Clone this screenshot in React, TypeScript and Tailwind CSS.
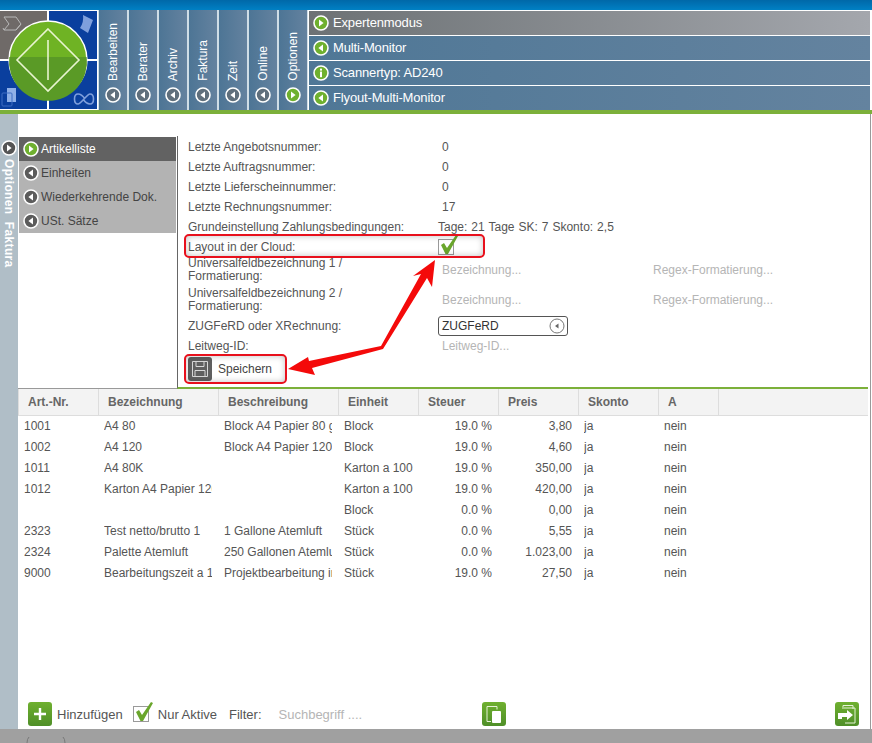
import React from "react";

const tabs = ["Bearbeiten", "Berater", "Archiv", "Faktura", "Zeit", "Online", "Optionen"];

const menu = ["Artikelliste", "Einheiten", "Wiederkehrende Dok.", "USt. Sätze"];

const fields = [
  { label: "Letzte Angebotsnummer:", value: "0" },
  { label: "Letzte Auftragsnummer:", value: "0" },
  { label: "Letzte Lieferscheinnummer:", value: "0" },
  { label: "Letzte Rechnungsnummer:", value: "17" },
];

const columns = [
  { title: "Art.-Nr.", width: "w-[80px]", align: "text-left pr-[6px]" },
  { title: "Bezeichnung", width: "w-[120px]", align: "text-left pr-[6px]" },
  { title: "Beschreibung", width: "w-[120px]", align: "text-left pr-[6px]" },
  { title: "Einheit", width: "w-[80px]", align: "text-left pr-[5px]" },
  { title: "Steuer", width: "w-[80px]", align: "text-right pr-[6px]" },
  { title: "Preis", width: "w-[80px]", align: "text-right pr-[6px]" },
  { title: "Skonto", width: "w-[80px]", align: "text-left pr-[6px]" },
  { title: "A", width: "w-[60px]", align: "text-left pr-[6px]" },
];

const rows = [
  ["1001", "A4 80", "Block A4 Papier 80 g", "Block", "19.0 %", "3,80", "ja", "nein"],
  ["1002", "A4 120", "Block A4 Papier 120 g", "Block", "19.0 %", "4,60", "ja", "nein"],
  ["1011", "A4 80K", "", "Karton a 100", "19.0 %", "350,00", "ja", "nein"],
  ["1012", "Karton A4 Papier 120", "", "Karton a 100", "19.0 %", "420,00", "ja", "nein"],
  ["", "", "", "Block", "0.0 %", "0,00", "ja", "nein"],
  ["2323", "Test netto/brutto 1", "1 Gallone Atemluft", "Stück", "0.0 %", "5,55", "ja", "nein"],
  ["2324", "Palette Atemluft", "250 Gallonen Atemluft", "Stück", "0.0 %", "1.023,00", "ja", "nein"],
  ["9000", "Bearbeitungszeit a 15", "Projektbearbeitung in", "Stück", "19.0 %", "27,50", "ja", "nein"],
];

function RoundIcon({ color, glyph = "left", size = 16 }: { color: string; glyph?: "left" | "right" | "info"; size?: number }) {
  return (
    <svg width={size} height={size} viewBox="0 0 16 16" className="shrink-0">
      <circle cx="8" cy="8" r="7" fill={color} stroke="#fff" strokeWidth="1.6" />
      {glyph === "left" && <path d="M10 4.600v6.800L5.400 8z" fill="#fff" />}
      {glyph === "right" && <path d="M6 4.600v6.800L10.600 8z" fill="#fff" />}
      {glyph === "info" && (
        <>
          <rect x="7" y="3.600" width="2" height="2" fill="#fff" />
          <rect x="7" y="6.600" width="2" height="5.600" fill="#fff" />
        </>
      )}
    </svg>
  );
}

function Logo() {
  return (
    <svg width="98" height="100" viewBox="0 0 98 100" className="shrink-0">
      <rect x="0" y="1" width="47" height="48" fill="#6f6a68" />
      <rect x="49" y="1" width="48" height="48" fill="#0a3f9e" />
      <rect x="0" y="51" width="47" height="48" fill="#0a3f9e" />
      <rect x="49" y="51" width="48" height="48" fill="#0a3f9e" />
      <path d="M4 7h12l5 7-5 6H4l5-6zM4 20l-1-2M16 20l5-6" fill="none" stroke="#b9b9b9" strokeWidth="1" />
      <path d="M83 5l10 5-5 13-8-5q4-6 3-13z" fill="#7f9fdc" />
      <rect x="7" y="78" width="9" height="14" fill="#8fb0e8" />
      <rect x="2" y="83" width="10" height="13" rx="1" fill="none" stroke="#3f6fc4" strokeWidth="1" />
      <path d="M85 89c-2-3-5-5-7-5-2.500 0-3.500 2-3.500 5s1 5 3.500 5c3 0 9-10 12-10 2.500 0 3.500 2 3.500 5s-1 5-3.500 5c-2 0-5-2-7-5" fill="none" stroke="#7f9fdc" strokeWidth="1.6" />
      <circle cx="48" cy="50" r="39" fill="#6fb324" stroke="#fff" strokeWidth="1.4" />
      <path d="M9.300 47a39 39 0 1 0 77.400 0z" fill="#5a9a26" />
      <path d="M48 19l31 31-31 31-31-31z" fill="none" stroke="#e8f4d0" strokeWidth="1.6" />
      <path d="M48 30v40" stroke="#e8f4d0" strokeWidth="1.6" />
    </svg>
  );
}

function Check() {
  return (
    <span className="relative block w-[16px] h-[16px] border border-[#9a9a9a] bg-white">
      <svg width="22" height="22" viewBox="0 0 22 22" className="absolute left-[0px] top-[-6px]">
        <path d="M2 11l3-2 3 5L17 1l2 1L9 20H6.500z" fill="#6aa62c" />
      </svg>
    </span>
  );
}

function GreenButton({ children }: { children: React.ReactNode }) {
  return (
    <span className="flex items-center justify-center w-[24px] h-[24px] rounded-[3px] bg-gradient-to-b from-[#6fb02f] to-[#4f8f28]">
      {children}
    </span>
  );
}

function CopyIcon() {
  return (
    <svg width="20" height="22" viewBox="0 0 20 22">
      <path d="M3 3.500h10v3M3 3.500v15h4" fill="none" stroke="#e6f2d6" strokeWidth="1" />
      <rect x="8" y="8" width="9" height="12" rx="1" fill="#fff" />
    </svg>
  );
}

function ExportIcon() {
  return (
    <svg width="22" height="22" viewBox="0 0 22 22">
      <path d="M7 6V2.500h10V6M8 5h11v15H9" fill="none" stroke="#e6f2d6" strokeWidth="1" />
      <path d="M2 10h9V7l6 5-6 5v-3H6v2H2z" fill="#fff" />
    </svg>
  );
}

function SaveIcon() {
  return (
    <span className="flex items-center justify-center w-[24px] h-[24px] rounded-[3px] bg-[#5f5f5f]">
      <svg width="18" height="18" viewBox="0 0 18 18">
        <path d="M1.500 1.500h15v15h-15zM5 1.500v5h8v-5M4 16.500v-6h10v6" fill="none" stroke="#d8d8d8" strokeWidth="1" />
      </svg>
    </span>
  );
}

export default function App() {
  return (
    <div className="relative flex flex-col w-[872px] h-[743px] overflow-hidden bg-white text-[12px] text-[#555] font-['Liberation_Sans',Arial,sans-serif]">
      <div className="h-[10px] bg-gradient-to-b from-[#0068a8] to-[#0080c4]" />

      <header className="flex h-[100px] bg-white">
        <Logo />
        <div className="flex">
          {tabs.map((t) => (
            <div key={t} className="flex flex-col items-center justify-end w-[30px] h-[100px] pb-[7px] border-x border-[#cfdde6] bg-gradient-to-r from-[#4d7595] to-[#64829f]">
              <span className="[writing-mode:vertical-rl] rotate-180 text-white leading-[16px]">{t}</span>
              <span className="mt-[6px]">
                {t === "Optionen" ? <RoundIcon color="#6fb02f" glyph="right" /> : <RoundIcon color="#5f6f7c" />}
              </span>
            </div>
          ))}
        </div>
        <div className="flex flex-col flex-1 gap-[1px] pl-[1px] pr-[2px] pt-[1px]">
          <Bar label="Expertenmodus" glyph="right" className="bg-gradient-to-r from-[#6d7275] to-[#a4a7ad]" />
          <Bar label="Multi-Monitor" />
          <Bar label="Scannertyp: AD240" glyph="info" />
          <Bar label="Flyout-Multi-Monitor" />
        </div>
      </header>

      <div className="h-[4px] bg-[#7cb03a]" />

      <div className="flex flex-1 min-h-0">
        <aside className="flex flex-col items-center w-[18px] pt-[26px] pr-[1px] bg-[#b0bec7]">
          <RoundIcon color="#555" glyph="right" />
          <span className="mt-[3px] [writing-mode:vertical-rl] font-bold text-white whitespace-pre tracking-[0.35px]">Optionen  Faktura</span>
        </aside>

        <main className="flex flex-col flex-1 pr-[2px] border-r border-r-[#999] mr-[1px]">
          <section className="flex h-[275px] border-b border-b-[#999]">
            <nav className="w-[159px] pt-[23px] pl-[1px]">
              <ul className="w-[157px] bg-[#b3b3b3]">
                {menu.map((m, i) => (
                  <li key={m} className={i === 0 ? "flex items-center gap-[2px] h-[24px] pl-[4px] bg-[#626262] text-white" : "flex items-center gap-[2px] h-[24px] pl-[4px] text-[#444]"}>
                    {i === 0 ? <RoundIcon color="#6fb02f" glyph="right" /> : <RoundIcon color="#5c5c5c" />}
                    {m}
                  </li>
                ))}
              </ul>
            </nav>
            <div className="flex-1 mt-[22px] -mb-px pl-[10px] pt-[1px] border-l border-l-[#666] border-b-2 border-b-[#7cb03a]">
              {fields.map((f) => (
                <div key={f.label} className="flex items-center h-[20px]">
                  <span className="w-[254px]">{f.label}</span>
                  <span>{f.value}</span>
                </div>
              ))}
              <div className="flex items-center h-[20px]">
                <span className="w-[250px]">Grundeinstellung Zahlungsbedingungen:</span>
                <span className="[word-spacing:0.65px]">Tage: 21 Tage SK: 7 Skonto: 2,5</span>
              </div>
              <div className="flex items-center h-[19px] mb-[1px]">
                <span className="w-[250px]">Layout in der Cloud:</span>
                <Check />
              </div>
              <FormatRow n={1} className="h-[30px]" />
              <FormatRow n={2} className="h-[28px]" />
              <div className="flex items-center h-[22px]">
                <span className="w-[250px]">ZUGFeRD oder XRechnung:</span>
                <span className="flex items-center justify-between w-[130px] h-[20px] pl-[3px] pr-[2px] border border-[#555] rounded-[3px] text-[#333]">
                  ZUGFeRD
                  <svg width="16" height="16" viewBox="0 0 16 16">
                    <circle cx="8" cy="8" r="7" fill="#fff" stroke="#777" strokeWidth="1" />
                    <path d="M9.500 5.500v5L6 8z" fill="#666" />
                  </svg>
                </span>
              </div>
              <div className="flex items-center h-[17px]">
                <span className="w-[254px]">Leitweg-ID:</span>
                <span className="text-[#b5b5b5]">Leitweg-ID...</span>
              </div>
              <div className="flex items-center gap-[6px] h-[27px] pt-[2px]">
                <SaveIcon />
                <span className="text-[#444]">Speichern</span>
              </div>
            </div>
          </section>

          <div className="flex h-[27px] bg-[#f3f3f3] border-b border-b-[#ddd]">
            {columns.map((c) => (
              <div key={c.title} className={`${c.width} flex items-center pl-[9px] border-l border-l-[#ddd] font-bold text-[#666]`}>
                {c.title}
              </div>
            ))}
            <div className="flex-1 border-l border-l-[#ddd]" />
          </div>

          <div className="flex-1 min-h-0 -mt-px">
            {rows.map((r, i) => (
              <div key={i} className="flex items-center h-[21px]">
                {r.map((v, j) => (
                  <div key={j} className={`${columns[j].width} ${columns[j].align} pl-[6px]`}>
                    <div className="overflow-hidden whitespace-nowrap h-[16px] leading-[16px]">{v}</div>
                  </div>
                ))}
              </div>
            ))}
          </div>

          <footer className="flex items-center h-[30px] pl-[10px] text-[13px]">
            <GreenButton>
              <svg width="16" height="16" viewBox="0 0 16 16"><path d="M6.800 2h2.400v4.800H14v2.400H9.200V14H6.800V9.200H2V6.800h4.800z" fill="#fff" /></svg>
            </GreenButton>
            <span className="ml-[5px] mt-[1px]">Hinzufügen</span>
            <span className="ml-[10px]"><Check /></span>
            <span className="ml-[9px] mt-[2px]">Nur Aktive</span>
            <span className="ml-[12px] mt-[2px]">Filter:</span>
            <span className="ml-[17px] mt-[2px] text-[#b5b5b5]">Suchbegriff ....</span>
            <span className="ml-[120px]"><GreenButton><CopyIcon /></GreenButton></span>
            <span className="ml-auto mr-[9px]"><GreenButton><ExportIcon /></GreenButton></span>
          </footer>
        </main>
      </div>

      <div className="h-[14px] pl-[24px] pt-[7px] bg-[#a0a0a0]">
        <svg width="44" height="7" viewBox="0 0 44 7">
          <path d="M3 7q0-4 2-6M41 7q0-4-2-6" fill="none" stroke="#777" strokeWidth="1" />
        </svg>
      </div>

      {/* annotations from the screenshot */}
      <div className="absolute left-[184px] top-[234px] w-[301px] h-[24px] rounded-[5px] border-2 border-[#e8101c] shadow-[inset_0_0_6px_rgba(0,0,0,0.25)]" />
      <div className="absolute left-[184px] top-[354px] w-[103px] h-[30px] rounded-[5px] border-2 border-[#e8101c] shadow-[inset_0_0_6px_rgba(0,0,0,0.25)]" />
      <svg width="872" height="743" className="absolute left-0 top-0 pointer-events-none">
        <polygon points="435,260 432,287 427,278 383,349 312,368 315,375 288,369 308,357 309,361 381,346 421,274 413,276" fill="#f40a0a" />
      </svg>
    </div>
  );
}

function Bar({ label, glyph = "left", className = "bg-gradient-to-r from-[#4f7796] to-[#64839f]" }: { label: string; glyph?: "left" | "right" | "info"; className?: string }) {
  return (
    <div className={`flex items-center gap-[4px] h-[24px] pl-[4px] text-[13px] tracking-[-0.15px] text-white ${className}`}>
      <RoundIcon color="#6fb02f" glyph={glyph} />
      {label}
    </div>
  );
}

function FormatRow({ n, className }: { n: number; className: string }) {
  return (
    <div className={`flex leading-[13px] ${className}`}>
      <span className="w-[254px] pr-[80px]">Universalfeldbezeichnung {n} / Formatierung:</span>
      <span className="w-[211px] pt-[7px] text-[#b5b5b5]">Bezeichnung...</span>
      <span className="pt-[7px] text-[#b5b5b5]">Regex-Formatierung...</span>
    </div>
  );
}
